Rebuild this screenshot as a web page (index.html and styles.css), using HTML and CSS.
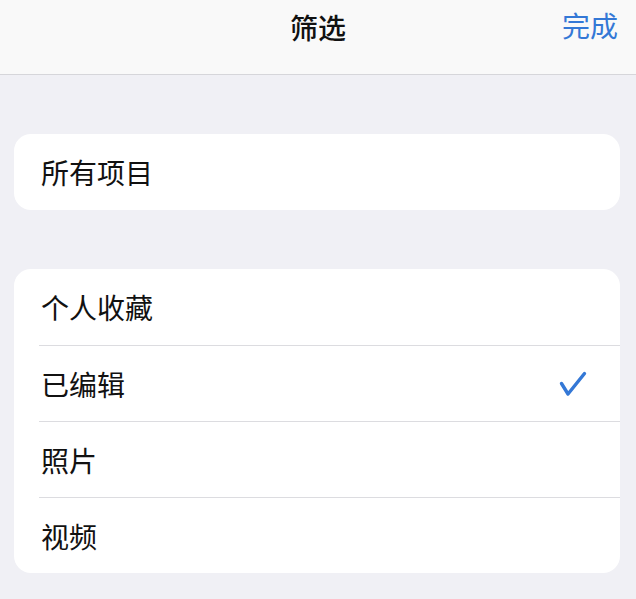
FILE: index.html
```html
<!DOCTYPE html>
<html lang="zh-CN">
<head>
<meta charset="utf-8">
<title>筛选</title>
<link rel="stylesheet" href="styles.css">
</head>
<body>
  <header class="nav">
    <div class="nav-title">筛选</div>
    <div class="nav-done">完成</div>
  </header>
  <main class="content">
    <section class="group">
      <div class="row"><span class="label">所有项目</span></div>
    </section>
    <section class="group">
      <div class="row"><span class="label">个人收藏</span></div>
      <div class="row"><span class="label">已编辑</span>
        <svg class="check" width="30" height="28" viewBox="0 0 30 28" aria-hidden="true">
          <path d="M4.5 13.5 L11 24 L27.5 3.5" fill="none" stroke="#3478d6" stroke-width="3.4" stroke-linecap="round" stroke-linejoin="round"/>
        </svg>
      </div>
      <div class="row"><span class="label">照片</span></div>
      <div class="row"><span class="label">视频</span></div>
    </section>
  </main>
</body>
</html>
```

FILE: styles.css
```css
html, body {
  margin: 0;
  padding: 0;
}
body {
  background: #f0f0f5;
  font-family: "Noto Sans CJK SC", "Noto Sans", sans-serif;
  color: #111;
  width: 636px;
  height: 599px;
  overflow: hidden;
}
.nav {
  height: 74px;
  background: #f9f9f9;
  border-bottom: 1px solid #d6d6da;
  display: flex;
  align-items: center;
  justify-content: center;
  position: relative;
  box-sizing: content-box;
}
.nav-title {
  font-size: 28px;
  font-weight: 500;
  color: #111;
  margin-top: -20px;
}
.nav-done {
  position: absolute;
  right: 18px;
  top: 5px;
  font-size: 28px;
  color: #3478d6;
}
.content {
  padding: 59px 16px 0 14px;
  display: flex;
  flex-direction: column;
  gap: 59px;
}
.group {
  background: #fff;
  border-radius: 17px;
  overflow: hidden;
}
.row {
  height: 76px;
  margin-left: 25px;
  padding-left: 2px;
  padding-right: 33px;
  display: flex;
  align-items: center;
  justify-content: space-between;
  box-sizing: border-box;
}
.row + .row {
  border-top: 1px solid #dcdce0;
}
.label {
  font-size: 28px;
  line-height: 1;
}
.check {
  display: block;
}
```
